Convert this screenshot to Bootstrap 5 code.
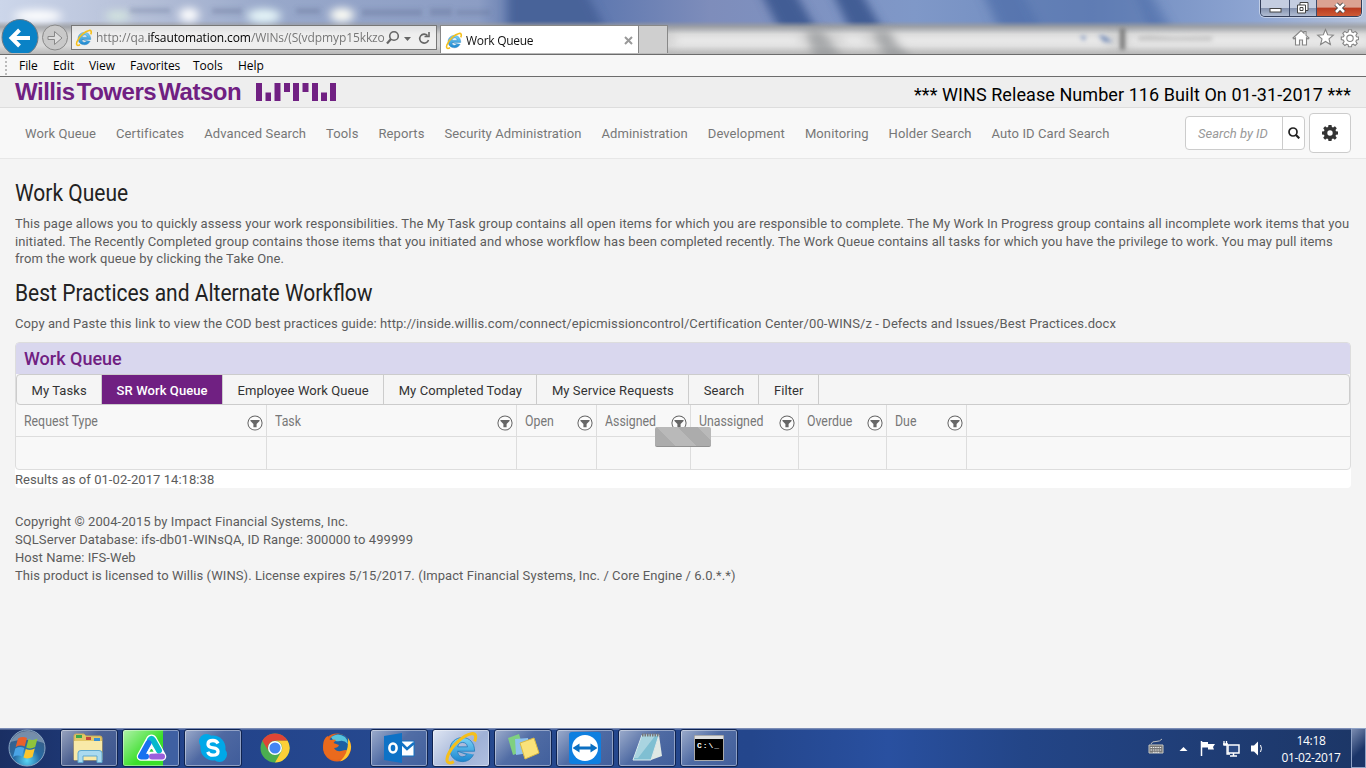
<!DOCTYPE html>
<html lang="en">
<head>
<meta charset="utf-8">
<title>Work Queue</title>
<link href="https://cdn.jsdelivr.net/npm/bootstrap@5.3.0/dist/css/bootstrap.min.css" rel="stylesheet">
<style>
body{width:1366px;height:768px;overflow:hidden;background:#f4f4f4;font-family:Roboto,"Liberation Sans",sans-serif;font-size:13px;line-height:17.6px;color:#5c5c5c}
svg{display:block;flex:none}
.seg{font-family:"Open Sans","Noto Sans",sans-serif}
.chrome{height:54px;background:#c6c6c6}
.glass{position:absolute;inset:0}
.tools{padding:25px 0 0 0;height:54px}
.addr{width:366px;height:25px;border:1px solid #777;background:rgba(247,247,247,.75);margin-left:3px;padding-left:3px}
.url{white-space:nowrap;font-size:12px;color:#777;letter-spacing:-.1px;margin-left:3px;width:289px}
.tab-on{width:199px;height:28px;background:#fff;border:1px solid #888;border-bottom:0;margin-left:3px;padding:2px 5px 0 4px;color:#111;font-size:12px;letter-spacing:-.3px}
.tab-new{width:29px;height:28px;border:1px solid #888;border-left:0;border-bottom:0;background:#cfcfcf}
.winctl{position:absolute;right:4px;top:0;width:102px;height:17px;border:1px solid #333e59;border-top:0;border-radius:0 0 5px 5px;overflow:hidden;box-shadow:0 0 0 1px rgba(255,255,255,.45)}
.winctl span{background:linear-gradient(#c4cde0 0 48%,#8593af 52%,#b1bdd3);border-right:1px solid #3e4c6b}
.winctl .cls{background:linear-gradient(#dba292 0 45%,#b83a20 50%,#cf5b35);border:0}
.menus{height:23px;background:#f7f7f7;border-top:1px solid #6c6c6c;border-bottom:1px solid #6c6c6c;color:#000;font-size:12px;padding-left:5px;letter-spacing:-.05px}
.grip{width:1px;height:18px;border-left:2px dotted #bbb;margin-right:12px}
.brandbar{height:31px;background:#eee;border-bottom:1px solid #ddd;padding:0 15px}
.wordmark{font:bold 24px/24px "Liberation Sans",sans-serif;color:#702082;word-spacing:-4px;letter-spacing:-.48px;white-space:nowrap}
.release{font-size:18px;color:#000;letter-spacing:.07px;white-space:nowrap;padding-top:5px}
.mainnav{height:51px;background:#f8f8f8;border-bottom:1px solid #e7e7e7;padding:0 15px}
.mainnav .nav-link{color:#777;padding:1px 10px 0;white-space:nowrap;letter-spacing:.1px}
.idbox{width:120px;height:34px;border:1px solid #ccc;border-radius:4px;background:#fff;overflow:hidden}
.idbox i{width:97px;border-right:1px solid #ccc;padding:1px 0 0 12px;color:#999}
.gearbtn{width:42px;height:40px;border:1px solid #ccc;border-radius:4px;background:#fff;margin-left:4px}
.cond{display:inline-block;transform-origin:0 50%;transform:scaleX(.875);white-space:nowrap}
.headline{font-size:24px;line-height:26px;font-weight:400;color:#222;margin:0}
.para{letter-spacing:.093px;white-space:nowrap;margin:0}
.panelbox{width:1336px;height:146px;background:#fff;border-radius:4px}
.gridbox{height:128px;border:1px solid #ddd;border-radius:4px;background:#f8f8f8;overflow:hidden}
.gridtitle{height:31px;background:#d9d7ee;color:#702082;font-size:18px;line-height:31px;font-weight:500;padding-left:8px}
.tabsrow{height:31px;background:#f5f5f5;border:1px solid #ccc;border-radius:4px}
.tabsrow span{border-right:1px solid #ccc;color:#333;padding:0 14.300px 0 14.500px;white-space:nowrap;height:29px;line-height:31px;letter-spacing:.09px}
.tabsrow .on{background:#702082;color:#fff;font-weight:500}
.gcell{border-right:1px solid #ddd;padding:0 3px 0 8px;font-size:14px;color:#777}
.hrow{height:32px;border-bottom:1px solid #ddd}
.hrow .cond{transform:scaleX(.88);margin-top:1px}
.hrow svg{margin-top:4px}
.brow{height:33px}
.c1{width:251px}.c2{width:250px}.c3{width:80px}.c4{width:94px}.c5{width:108px}.c6{width:88px}
.results{padding-top:1px;letter-spacing:.06px}
.legal{margin-top:25px;line-height:18px;letter-spacing:.07px}
.loader{position:absolute;left:655px;top:427px;width:56px;height:20px;border-radius:2px;border-bottom:1px solid #919191;background:repeating-linear-gradient(45deg,#acacac 0 14.5px,#b9b9b9 14.5px 29px)}
.taskbar{position:absolute;left:0;right:0;top:728px;height:40px;background:linear-gradient(#7b8cb5 0 1px,rgba(0,0,0,0) 2px),linear-gradient(90deg,#1a2f63,#22428a 12%,#26498f 30%,#24468c 55%,#2950a0 65%,#234587 75%,#1c3666)}
.tb{width:58px;height:38px;margin:0 4px 0 0;border:1px solid #0f2350;border-radius:3px;background:linear-gradient(135deg,rgba(255,255,255,.55),rgba(255,255,255,.2) 45%,rgba(255,255,255,.13));box-shadow:inset 0 0 0 1px rgba(255,255,255,.4)}
.tb.act{background:linear-gradient(135deg,#dfe6f3,#9fb1d6 60%,#b0c0e0)}
.tb.half{background:linear-gradient(135deg,rgba(255,255,255,.6),rgba(255,255,255,0) 50%),linear-gradient(90deg,#3adf2a 0 40px,#3f60a2 40px)}
.tb.none{border:0;background:none;box-shadow:none}
.clock{width:74px;color:#fff;font-size:12px;line-height:17px;text-align:center;letter-spacing:-.35px;padding-top:1px}
.showdesk{width:15px;height:40px;border:1px solid #8fa2c6;background:linear-gradient(135deg,#7a8bb0,#1b3568 60%)}
</style>
</head>
<body>
<svg width="0" height="0" class="position-absolute" aria-hidden="true"><defs>
<linearGradient id="blue" x1="0" y1="0" x2="0" y2="1"><stop offset="0" stop-color="#7bd3f7"/><stop offset="1" stop-color="#1b86cf"/></linearGradient>
<symbol id="ie" viewBox="0 0 32 32"><path d="M27 21.500C25 25.500 21.500 28 17 28 10 28 5.500 23.500 5.500 17S10.500 6 17 6 28 11 28 18.500H12.500M12.500 14.500H21.500C21 11.500 19.300 10.500 17 10.500S13 11.700 12.500 14.500M12.500 18.500C12.800 22 14.500 23.500 17 23.500 19 23.500 20 22.800 20.800 21.500Z" fill="url(#blue)" fill-rule="evenodd" stroke="#1f78b8" stroke-width=".7"/><path d="M28 9.500C30 5 29 1.800 25 2.500 18 3.800 7 13 3.500 22.500 1.500 28 3.500 31 9 28" fill="none" stroke="#f5bf1b" stroke-width="2.800"/></symbol>
<symbol id="filt" viewBox="0 0 14 14"><circle cx="7" cy="7" r="6.200" fill="#fcfcfc" stroke="#666" stroke-width=".9"/><path d="M3 4.300h8v1L8.400 7.800V10.700H5.600V7.800L3 5.300z" fill="#666"/></symbol>
<filter id="b4" filterUnits="userSpaceOnUse" x="-60" y="-60" width="1500" height="180"><feGaussianBlur stdDeviation="5 4"/></filter>
<filter id="b2" filterUnits="userSpaceOnUse" x="-60" y="-60" width="1500" height="180"><feGaussianBlur stdDeviation="2"/></filter>
<linearGradient id="sky"><stop offset="0" stop-color="#ccd6ea"/><stop offset=".1" stop-color="#b6c0d8"/><stop offset=".2" stop-color="#98a8ca"/><stop offset=".35" stop-color="#8c9dc4"/><stop offset=".38" stop-color="#6079ad"/><stop offset=".44" stop-color="#6079b0"/><stop offset=".52" stop-color="#7e8dbb"/><stop offset=".67" stop-color="#7f98c8"/><stop offset=".8" stop-color="#6d89bd"/><stop offset=".92" stop-color="#8ea5d2"/><stop offset="1" stop-color="#b5c2da"/></linearGradient>
<linearGradient id="bar" x1="0" y1="0" x2="0" y2="1"><stop offset="0" stop-color="#999" stop-opacity="0"/><stop offset=".18" stop-color="#a0a2a6" stop-opacity=".95"/><stop offset=".4" stop-color="#d3d3d3"/><stop offset=".75" stop-color="#d8d8d8"/><stop offset="1" stop-color="#b8b8b8"/></linearGradient>
<radialGradient id="orb" cx=".5" cy=".85" r=".8"><stop offset="0" stop-color="#59d6f5"/><stop offset=".45" stop-color="#276ba4"/><stop offset="1" stop-color="#3d5a80"/></radialGradient>
</defs></svg>

<header class="chrome position-relative">
<svg class="glass" width="1366" height="54" viewBox="0 0 1366 54"><path fill="url(#sky)" d="M0 0h1366v54H0z"/>
<g filter="url(#b4)"><path d="M508-20h72l26 50h-98z" fill="#456097" opacity=".9"/><path d="M754-20h34l38 66h-38zM826-20h28l38 66h-34z" fill="#3f5b92" opacity=".95"/><path d="M975-20h160l30 55h-165z" fill="#4c6ba8" opacity=".42"/><path d="M980-20h35l30 55h-40zM1130-20h14l32 55h-24z" fill="#4c6ba8" opacity=".5"/></g>
<path fill="url(#bar)" d="M0 21h1366v33H0z"/>
<g filter="url(#b4)"><path d="M675 36h120l10 9H675zM838 36h22l10 9h-22zM890 36h217v9H896zM1130 36h240v9h-240z" fill="#f4f4f4" opacity=".8"/><path d="M806 30h16l24 34h-30zM872 30h16l28 34h-28z" fill="#8f9094" opacity=".65"/>
<ellipse cx="38" cy="16" rx="24" ry="6" fill="#fff"/><ellipse cx="118" cy="16" rx="13" ry="5" fill="#d5e6df"/><ellipse cx="189" cy="15" rx="10" ry="7" fill="#fff"/><ellipse cx="264" cy="16" rx="17" ry="7" fill="#e6f6f8"/><ellipse cx="342" cy="15" rx="12" ry="7" fill="#fffff6"/></g>
<g filter="url(#b2)"><path d="M1120 28h5v22h-5z" fill="#777"/><path d="M1080 36h6l-2 5zM1098 35l7 1 8 6h-9z" fill="#7c92bb"/><path d="M1138 36l12-1 24 2 38-1v5h-74z" fill="#bbb" opacity=".7"/><path d="M362 9h60v7h-60zM430 8h22v8h-22zM456 10h34v5h-34zM130 8h40v5h-40zM212 8h30v6h-30zM296 8h24v6h-24z" fill="#596a90" opacity=".3"/></g></svg>
<div class="tools position-relative d-flex seg">
<svg width="68" height="29" viewBox="0 0 68 29" overflow="visible"><defs><clipPath id="cut"><path d="M0-10h70v38H0z"/></clipPath></defs><g clip-path="url(#cut)"><circle cx="20" cy="12.500" r="18" fill="#0a82c6" stroke="#6d7a85"/><path d="M30 13H13M19.500 5l-8 8 8 8" fill="none" stroke="#fff" stroke-width="4"/></g><circle cx="55" cy="12.500" r="12.500" fill="#c9c9c9" stroke="#888"/><path d="M48 11.500h6.500V6.500l7.500 6.500-7.500 6.500v-5H48z" fill="#dedede" stroke="#888"/></svg>
<div class="addr d-flex align-items-center">
<svg width="18" height="18"><use href="#ie"/></svg><div class="url">http://qa.<span class="text-black">ifsautomation.com</span>/WINs/(S(vdpmyp15kkzo</div>
<svg width="46" height="16" viewBox="0 0 46 16" fill="none" stroke="#666" stroke-width="1.600"><circle cx="9" cy="6" r="4.300"/><path d="M6 9l-4 4.500" stroke-width="2.200"/><path d="M19 7h7l-3.500 4z" fill="#666" stroke="none"/><path d="M42.500 5.500A4.500 4.500 0 1 0 43.500 10M44 2v4.500h-4.500" /></svg></div>
<div class="tab-on d-flex align-items-center"><svg width="18" height="18"><use href="#ie"/></svg><span class="flex-grow-1" style="margin-left:3px">Work Queue</span><svg width="9" height="9" viewBox="0 0 9 9"><path d="M1 1l7 7M8 1L1 8" stroke="#999" stroke-width="2"/></svg></div><div class="tab-new"></div>
<div class="d-flex ms-auto" style="padding:3px 7px 0 0">
<svg width="68" height="20" viewBox="0 0 68 20" fill="#fff" stroke="#858585" stroke-width="1.100"><path d="M2 10l8-7.500 3 2.700V3.500h2v3.800l3 2.700-1 1-1.500-1.200V17h-4v-5h-3v5h-4V9.800L3 11z"/><path d="M34.500 1.500l2.200 5.300 5.600.4-4.300 3.700 1.400 5.600-4.900-3-4.900 3 1.400-5.600-4.300-3.700 5.600-.4z"/><path d="M57.500 1.800h3l.3 2.200 1.500.7 1.900-1.300 2 2-1.300 1.900.6 1.500 2.100.3v2.500l-2.200.5-.5 1.500 1.300 1.900-2 2-1.900-1.300-1.500.6-.3 2h-3l-.3-2-1.500-.6-1.900 1.300-2-2 1.300-1.900-.6-1.500-2.200-.5V9.100l2.200-.3.6-1.500-1.300-1.900 2-2L55.700 4.700l1.500-.7z"/><circle cx="59" cy="10.300" r="3.200"/></svg></div>
</div>
<div class="winctl d-flex"><span style="width:29px"><svg width="28" height="16"><rect x="9" y="8.500" width="11" height="3.500" fill="#fff" stroke="#444"/></svg></span><span style="width:27px"><svg width="26" height="16" fill="#fff" stroke="#444"><path d="M10 2.500h8v8h-8z"/><path d="M7.500 5h8v8h-8z"/><path d="M10 7.500h3v3h-3z"/></svg></span><span class="cls flex-grow-1"><svg width="45" height="16" fill="none"><path d="M19 4l8 8M27 4l-8 8" stroke="#444" stroke-width="4.500"/><path d="M19 4l8 8M27 4l-8 8" stroke="#fff" stroke-width="2.600"/></svg></span></div>
</header>

<nav class="menus d-flex align-items-center seg"><span class="grip"></span><span style="width:34px">File</span><span style="width:36px">Edit</span><span style="width:41px">View</span><span style="width:63px">Favorites</span><span style="width:45px">Tools</span><span>Help</span></nav>

<div class="brandbar d-flex justify-content-between align-items-center">
<div class="d-flex align-items-center"><span class="wordmark" style="width:241px">Willis Towers Watson</span>
<svg width="81" height="18" viewBox="0 0 81 18" fill="#702082"><path d="M0 0h6v18H0zM9.500 9.500h5.500V18H9.500zM18.500 0h6v18h-6zM28 0h6v9h-6zM37 0h6v18h-6zM46.500 0h6v9h-6zM56 0h6v18h-6zM65 9.500h6V18h-6zM74 0h6v18h-6z"/></svg></div>
<span class="release">*** WINS Release Number 116 Built On 01-31-2017 ***</span></div>

<div class="mainnav d-flex align-items-center">
<nav class="nav flex-nowrap flex-grow-1"><a class="nav-link">Work Queue</a><a class="nav-link">Certificates</a><a class="nav-link">Advanced Search</a><a class="nav-link">Tools</a><a class="nav-link">Reports</a><a class="nav-link">Security Administration</a><a class="nav-link">Administration</a><a class="nav-link">Development</a><a class="nav-link">Monitoring</a><a class="nav-link">Holder Search</a><a class="nav-link">Auto ID Card Search</a></nav>
<div class="idbox d-flex"><i class="d-flex align-items-center"><span>Search by ID</span></i><svg class="m-auto" width="12" height="12" viewBox="0 0 12 12" fill="none" stroke="#222"><circle cx="5" cy="5" r="4" stroke-width="1.700"/><path d="M8 8l3.300 3.300" stroke-width="2.200"/></svg></div>
<div class="gearbtn d-flex"><svg class="m-auto" width="16" height="16" viewBox="0 0 16 16"><path fill="#333" fill-rule="evenodd" d="M6.500 0h3l.4 2.100 1.200.5L12.900 1.300 14.800 3.200 13.500 5l.5 1.200 2 .4v2.800l-2 .4-.5 1.200 1.300 1.800-1.900 1.900-1.800-1.300-1.200.5-.4 2.100h-3l-.4-2.100-1.200-.5-1.800 1.300-1.900-1.900L2.500 11 2 9.800 0 9.400V6.600l2-.4L2.500 5 1.200 3.200l1.900-1.900 1.800 1.300 1.200-.5zM8 5.300a2.700 2.700 0 1 0 0 5.400 2.700 2.700 0 0 0 0-5.400"/></svg></div>
</div>

<main style="padding:21px 15px 0">
<h1 class="headline"><span class="cond">Work Queue</span></h1>
<p class="para" style="margin-top:9px">This page allows you to quickly assess your work responsibilities. The My Task group contains all open items for which you are responsible to complete. The My Work In Progress group contains all incomplete work items that you<br>initiated. The Recently Completed group contains those items that you initiated and whose workflow has been completed recently. The Work Queue contains all tasks for which you have the privilege to work. You may pull items<br>from the work queue by clicking the Take One.</p>
<h2 class="headline" style="margin-top:12px"><span class="cond">Best Practices and Alternate Workflow</span></h2>
<p class="para" style="margin-top:9px">Copy and Paste this link to view the COD best practices guide: http://inside.willis.com/connect/epicmissioncontrol/Certification Center/00-WINS/z - Defects and Issues/Best Practices.docx</p>
<section class="panelbox" style="margin-top:10px">
<div class="gridbox"><div class="gridtitle">Work Queue</div>
<div class="tabsrow d-flex"><span>My Tasks</span><span class="on">SR Work Queue</span><span>Employee Work Queue</span><span>My Completed Today</span><span>My Service Requests</span><span>Search</span><span>Filter</span></div>
<div class="hrow d-flex">
<div class="gcell c1 d-flex align-items-center justify-content-between"><span class="cond">Request Type</span><svg width="16" height="16"><use href="#filt"/></svg></div>
<div class="gcell c2 d-flex align-items-center justify-content-between"><span class="cond">Task</span><svg width="16" height="16"><use href="#filt"/></svg></div>
<div class="gcell c3 d-flex align-items-center justify-content-between"><span class="cond">Open</span><svg width="16" height="16"><use href="#filt"/></svg></div>
<div class="gcell c4 d-flex align-items-center justify-content-between"><span class="cond">Assigned</span><svg width="16" height="16"><use href="#filt"/></svg></div>
<div class="gcell c5 d-flex align-items-center justify-content-between"><span class="cond">Unassigned</span><svg width="16" height="16"><use href="#filt"/></svg></div>
<div class="gcell c6 d-flex align-items-center justify-content-between"><span class="cond">Overdue</span><svg width="16" height="16"><use href="#filt"/></svg></div>
<div class="gcell c3 d-flex align-items-center justify-content-between"><span class="cond">Due</span><svg width="16" height="16"><use href="#filt"/></svg></div>
</div>
<div class="brow d-flex"><div class="gcell c1"></div><div class="gcell c2"></div><div class="gcell c3"></div><div class="gcell c4"></div><div class="gcell c5"></div><div class="gcell c6"></div><div class="gcell c3"></div></div>
</div>
<div class="results">Results as of 01-02-2017 14:18:38</div>
</section>
<footer class="legal">Copyright © 2004-2015 by Impact Financial Systems, Inc.<br>SQLServer Database: ifs-db01-WINsQA, ID Range: 300000 to 499999<br>Host Name: IFS-Web<br>This product is licensed to Willis (WINS). License expires 5/15/2017. (Impact Financial Systems, Inc. / Core Engine / 6.0.*.*)</footer>
</main>
<div class="loader"></div>

<div class="taskbar d-flex align-items-center">
<svg width="60" height="40" viewBox="0 0 60 40"><circle cx="27" cy="20" r="18" fill="url(#orb)" stroke="#8aa6c4" stroke-width="1"/><path d="M10 14Q17 2 29 3q11 1 15 12-17-6-34-1" fill="#fff" opacity=".3"/><path d="M18 10.500q4.500-2.500 9-.5l-2.300 8.500q-4.500-2-9 .5z" fill="#e8602c"/><path d="M28.500 11q4.500 2 9-.5l-2.300 8.500q-4.500 2.500-9 .5z" fill="#8fc43c"/><path d="M15.300 20.500q4.500-2.500 9-.5l-2.300 8.500q-4.500-2-9 .5z" fill="#4aa4e6"/><path d="M25.800 21q4.500 2 9-.5l-2.300 8.500q-4.500 2.500-9 .5z" fill="#fbc52c"/></svg>
<div class="tb d-flex"><svg class="m-auto" width="34" height="30" viewBox="0 0 34 30"><path d="M2 3q0-2 2-2h8l2 2h14q2 0 2 2v22H2z" fill="#e3c767" stroke="#c9ab5a"/><path d="M4 2h6v3H4z" fill="#3ba94a"/><path d="M14 4h5v3h-5z" fill="#c9443a"/><path d="M22 5h6v3h-6z" fill="#3a8ed0"/><path d="M2 8h28v19H2z" fill="#f8e9a8"/><path d="M6 29.500V20q0-2.500 3-2.500h18q3 0 3 2.500v9.500h-5V23H11v6.500z" fill="#a9daf0" stroke="#5fa9cf"/></svg></div>
<div class="tb half d-flex"><svg class="m-auto" width="32" height="30" viewBox="0 0 32 30" fill="none" stroke-linecap="round" stroke-linejoin="round"><path d="M6 23.500L15 7q1.500-2.500 3 0l9 16.500z" stroke="#fff" stroke-width="8.500"/><path d="M15 7q1.500-2.500 3 0l6 10.500" stroke="#06b9cc" stroke-width="6"/><path d="M13.500 10L6 23.500h5" stroke="#1771f0" stroke-width="6"/><path d="M17 23.500h10" stroke="#9b5fdc" stroke-width="6"/><path d="M16.500 13.500l-3.500 6h7z" fill="#39c850" stroke="#fff" stroke-width="1.500"/></svg></div>
<div class="tb d-flex"><svg class="m-auto" width="30" height="30" viewBox="0 0 30 30"><circle cx="15" cy="15" r="12.500" fill="#00a8e8"/><circle cx="8.500" cy="8.500" r="7.500" fill="#00a8e8"/><circle cx="21.500" cy="21.500" r="7.500" fill="#00a8e8"/><path d="M20 10.500Q18.500 7.500 15 7.500q-5 0-5 3.700 0 3 5 3.600 5 .6 5 3.700 0 3.700-5 3.700-4 0-5.300-3.400" fill="none" stroke="#fff" stroke-width="3.300"/></svg></div>
<div class="tb none d-flex"><svg class="m-auto" width="30" height="30" viewBox="0 0 30 30"><circle cx="15" cy="15" r="14.500" fill="#4bae4f"/><path d="M2.400 7.750A14.500 14.500 0 0 1 27.600 7.750H15A7.250 7.250 0 0 0 8.700 18.600z" fill="#de4535"/><path d="M27.600 7.750A14.500 14.500 0 0 1 15 29.500L21.300 18.600A7.250 7.250 0 0 0 15 7.750z" fill="#fcd037"/><circle cx="15" cy="15" r="7" fill="#fff"/><circle cx="15" cy="15" r="5.600" fill="#4285f4"/></svg></div>
<div class="tb none d-flex"><svg class="m-auto" width="30" height="30" viewBox="0 0 30 30"><circle cx="15" cy="14.500" r="14" fill="#e8641b"/><circle cx="17" cy="12" r="11" fill="#1b5fa4"/><path d="M9 4q7-5 14 0 3 3 3 7-4-4-8-3-5 1-7-1z" fill="#56c3dd"/><path d="M1.500 9Q3 4 6 3q0 3 3 4 3-1 5 0l-2.500 3 5.500 2q-1 3-5 3 3 5 9 2.500 3-1 5 .5-3 8-12 9Q3 26 1.500 17z" fill="#ea6a1d"/><path d="M26 5q5 7 2 14-3 8-10 9.500 9-8 8-23.500" fill="#fdc52f"/></svg></div>
<div class="tb d-flex"><svg class="m-auto" width="31" height="30" viewBox="0 0 31 30"><path d="M16 8h14v15H16z" fill="#fff" stroke="#1373c4"/><path d="M17 10l6 6 7-6" fill="none" stroke="#1373c4" stroke-width="2.500"/><path d="M0 3l18-3v30L0 27z" fill="#0e72c6"/><ellipse cx="9" cy="15" rx="3.600" ry="4.500" fill="none" stroke="#fff" stroke-width="2.600"/></svg></div>
<div class="tb act d-flex"><svg class="m-auto" width="35" height="35"><use href="#ie"/></svg></div>
<div class="tb d-flex"><svg class="m-auto" width="34" height="30" viewBox="0 0 34 30"><path d="M2 5l11-4 5 17-11 4z" fill="#7fd080"/><path d="M9 6l13-1 1 15-13 2z" fill="#8ec2ee"/><path d="M14 10l14-5 5 15-14 6z" fill="#fae27a" stroke="#d9b944"/></svg></div>
<div class="tb d-flex"><svg class="m-auto" width="32" height="32" viewBox="0 0 32 32"><rect width="32" height="32" rx="3" fill="#0e7fe0"/><circle cx="16" cy="16" r="13" fill="#fff"/><path d="M3.500 16l7-4.500v3h11v-3l7 4.500-7 4.500v-3h-11v3z" fill="#0b6fc2"/></svg></div>
<div class="tb d-flex"><svg class="m-auto" width="34" height="32" viewBox="0 0 34 32"><path d="M12 3h17l-8 25H3z" fill="#7fbfd2" stroke="#dcebee"/><path d="M29 3l3 21-11 4z" fill="#dfe8e4"/><path d="M12 4h13L8 26H4z" fill="#c4e3ea" opacity=".6"/><path d="M12 3h18" stroke="#777" stroke-width="3" stroke-dasharray="1.500 1"/></svg></div>
<div class="tb d-flex"><svg class="m-auto" width="30" height="26" viewBox="0 0 30 26"><path d="M.5.500h29v25H.5z" fill="#000" stroke="#aaa"/><path d="M1 1h28v3H1z" fill="#ddd"/><text x="3" y="13" font-family="Liberation Mono,monospace" font-size="8" font-weight="bold" fill="#fff" textLength="22">C:\_</text></svg></div>
<div class="d-flex ms-auto align-items-center">
<svg width="126" height="40" viewBox="0 0 126 40"><g fill="#c8c8c0" transform="translate(0 0)"><path d="M1 17h14v8H1z" fill="#777" stroke="#c8c8c0"/><path d="M2.500 19.500h11M2.500 22h11M5 24.300h7" stroke="#eee" stroke-dasharray="1.500 .8"/><path d="M3 16q1-3 5-2.500 4 0 6-2.500" fill="none" stroke="#bbb"/></g><path d="M31.500 23l4-4 4 4z" fill="#fff"/><path d="M53.500 13v15" stroke="#fff" stroke-width="1.500"/><path d="M54 14h6v2h7l-2 3 1 2.500h-6v-2h-6z" fill="#fff"/><path d="M80 17h11v8H80zM82 28h7M85.500 25v3" fill="#2c4b85" stroke="#fff" stroke-width="1.500"/><path d="M76 13v4h3v9h3M75 16h5M78.500 13v4" fill="none" stroke="#fff" stroke-width="1.300"/><path d="M103 17.500h3l4-4v14l-4-4h-3z" fill="#fff"/><path d="M112.500 17q2 3.500 0 7" fill="none" stroke="#fff"/></svg>
<div class="clock seg">14:18<br>01-02-2017</div><div class="showdesk" style="margin-left:3px"></div></div>
</div>
<script src="https://cdn.jsdelivr.net/npm/bootstrap@5.3.0/dist/js/bootstrap.bundle.min.js"></script>
</body>
</html>
